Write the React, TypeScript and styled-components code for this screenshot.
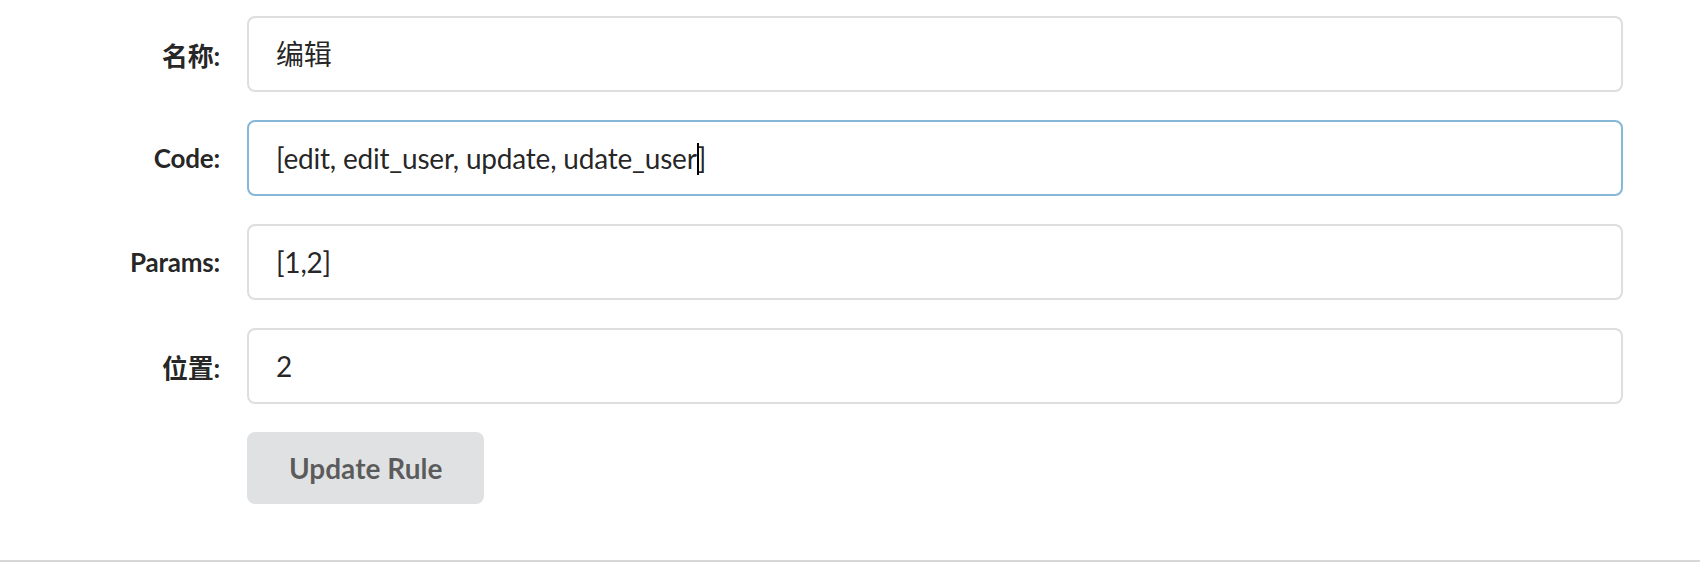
import React from "react";
import styled, { createGlobalStyle } from "styled-components";

const Global = createGlobalStyle`
  html, body { margin: 0; padding: 0; background: #ffffff; }
  body { font-family: Lato, "Noto Sans CJK SC", sans-serif; }
`;

const Segment = styled.div`
  background: #ffffff;
  padding: 16px 0 56px 0;
  border-bottom: 2px solid #d6d7d7;
  box-shadow: 0 3px 6px 0 rgba(34, 36, 38, 0.16);
`;

const Form = styled.form`
  display: flex;
  flex-direction: column;
  gap: 28px;
  margin: 0;
`;

const Row = styled.div`
  display: grid;
  grid-template-columns: 220px 1376px;
  column-gap: 27px;
  align-items: center;
`;

const Label = styled.label`
  text-align: right;
  font-family: Lato, "Noto Sans CJK SC", sans-serif;
  font-weight: 700;
  font-size: 26px;
  letter-spacing: -0.2px;
  color: rgba(0, 0, 0, 0.87);
  white-space: nowrap;
`;

const Field = styled.div<{ $focus?: boolean }>`
  box-sizing: border-box;
  height: 76px;
  padding: 19px 28px 19px 27px;
  border: 2px solid ${(p) => (p.$focus ? "#85b7d9" : "rgba(34, 36, 38, 0.15)")};
  border-radius: 8px;
  font-family: Lato, "Noto Sans CJK SC", sans-serif;
  font-size: 28px;
  line-height: 34px;
  letter-spacing: -0.2px;
  color: rgba(0, 0, 0, 0.87);
  white-space: nowrap;
  overflow: hidden;
`;

const Caret = styled.span`
  display: inline-block;
  width: 2px;
  height: 32px;
  background: #000;
  vertical-align: -6px;
  margin-right: -1px;
`;

const Button = styled.button`
  justify-self: start;
  grid-column: 2;
  border: none;
  background: #e0e1e2;
  color: rgba(0, 0, 0, 0.6);
  font-family: Lato, sans-serif;
  font-weight: 700;
  font-size: 28px;
  line-height: 1em;
  padding: 22px 42px;
  border-radius: 8px;
  cursor: pointer;
`;

export default function App() {
  return (
    <>
      <Global />
      <Segment>
        <Form onSubmit={(e) => e.preventDefault()}>
          <Row>
            <Label>名称:</Label>
            <Field>编辑</Field>
          </Row>
          <Row>
            <Label>Code:</Label>
            <Field $focus>
              [edit, edit_user, update, udate_user<Caret />]
            </Field>
          </Row>
          <Row>
            <Label>Params:</Label>
            <Field>[1,2]</Field>
          </Row>
          <Row>
            <Label>位置:</Label>
            <Field>2</Field>
          </Row>
          <Row>
            <Button type="submit">Update Rule</Button>
          </Row>
        </Form>
      </Segment>
    </>
  );
}
